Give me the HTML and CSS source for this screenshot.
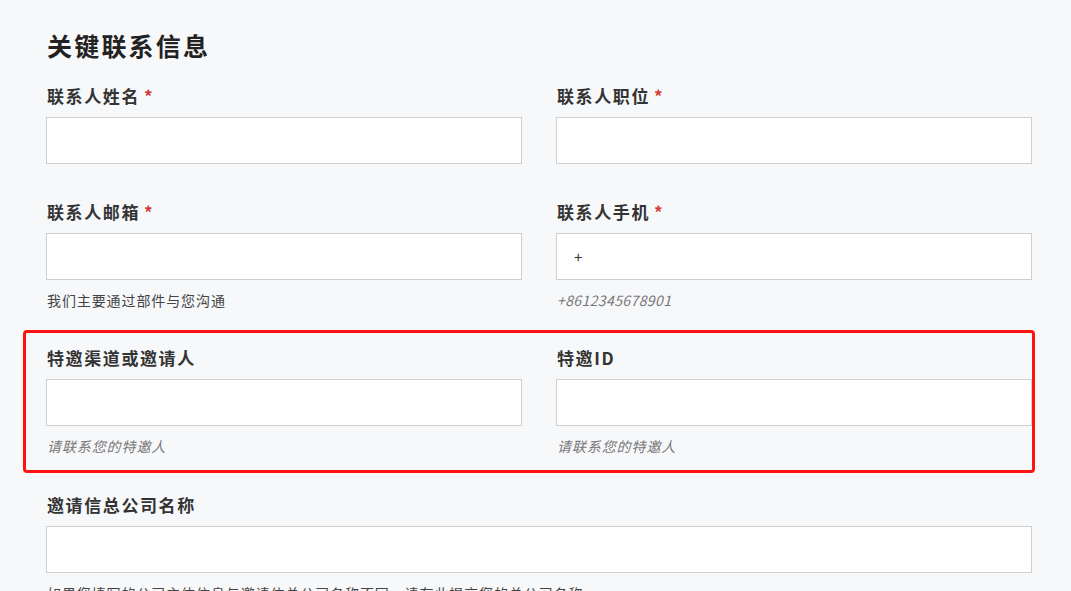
FILE: index.html
```html
<!DOCTYPE html>
<html lang="zh-CN">
<head>
<meta charset="utf-8">
<title>关键联系信息</title>
<link rel="stylesheet" href="styles.css">
</head>
<body>
<main class="page">
  <h2 class="section-title">关键联系信息</h2>
  <div class="form">
    <div class="row">
      <div class="field">
        <label class="label">联系人姓名<span class="req">*</span></label>
        <input class="input" type="text">
      </div>
      <div class="field">
        <label class="label">联系人职位<span class="req">*</span></label>
        <input class="input" type="text">
      </div>
    </div>
    <div class="row">
      <div class="field">
        <label class="label">联系人邮箱<span class="req">*</span></label>
        <input class="input" type="text">
        <div class="help">我们主要通过部件与您沟通</div>
      </div>
      <div class="field">
        <label class="label">联系人手机<span class="req">*</span></label>
        <input class="input input-phone" type="text" value="+">
        <div class="help help-italic help-phone">+8612345678901</div>
      </div>
    </div>
    <div class="row row-highlight">
      <div class="field">
        <label class="label">特邀渠道或邀请人</label>
        <input class="input" type="text">
        <div class="help help-italic">请联系您的特邀人</div>
      </div>
      <div class="field">
        <label class="label">特邀ID</label>
        <input class="input" type="text">
        <div class="help help-italic">请联系您的特邀人</div>
      </div>
      <div class="highlight-box"></div>
    </div>
    <div class="row row-single">
      <div class="field">
        <label class="label">邀请信总公司名称</label>
        <input class="input" type="text">
        <div class="help">如果您填写的公司主体信息与邀请信总公司名称不同，请在此提交您的总公司名称</div>
      </div>
    </div>
  </div>
</main>
</body>
</html>
```
FILE: styles.css
```css
html, body {
  margin: 0;
  padding: 0;
  background: #f7f8fa;
}

body {
  font-family: "Noto Sans CJK SC", "Noto Sans", "Liberation Sans", sans-serif;
  color: #333;
  overflow: hidden;
}

.page {
  width: 986px;
  margin-left: 46px;
  padding-top: 29px;
}

.section-title {
  margin: 0 0 24px 1px;
  font-size: 25px;
  line-height: 32px;
  letter-spacing: 2.2px;
  font-weight: 700;
  color: #222;
}

.form {
  display: flex;
  flex-direction: column;
  gap: 37px;
}

.row {
  display: grid;
  grid-template-columns: 1fr 1fr;
  column-gap: 34px;
}

.row-single {
  grid-template-columns: 1fr;
  margin-top: 1px;
}

.row-highlight {
  position: relative;
}

.highlight-box {
  position: absolute;
  top: -17px;
  left: -23px;
  right: -3px;
  bottom: -17px;
  border: 3px solid #ff1212;
  border-radius: 4px;
  pointer-events: none;
}

.field {
  display: flex;
  flex-direction: column;
}

.label {
  display: block;
  margin: 0 0 10px 1px;
  font-size: 17px;
  line-height: 22px;
  letter-spacing: 1.6px;
  font-weight: 700;
  color: #333;
}

.req {
  margin-left: 4px;
  color: #d23a3a;
}

.input {
  box-sizing: border-box;
  display: block;
  width: 100%;
  height: 47px;
  margin: 0;
  padding: 0 17px;
  border: 1px solid #cfcfcf;
  border-radius: 0;
  background: #fff;
  font-family: "Noto Sans CJK SC", "Noto Sans", sans-serif;
  font-size: 15px;
  color: #333;
  outline: none;
}

.help {
  margin: 10px 0 0 1px;
  font-size: 14px;
  line-height: 20px;
  letter-spacing: 0.9px;
  color: #444;
  white-space: nowrap;
}

.help-italic {
  font-style: italic;
  color: #777;
}

.help-phone {
  letter-spacing: 0.4px;
}
```
